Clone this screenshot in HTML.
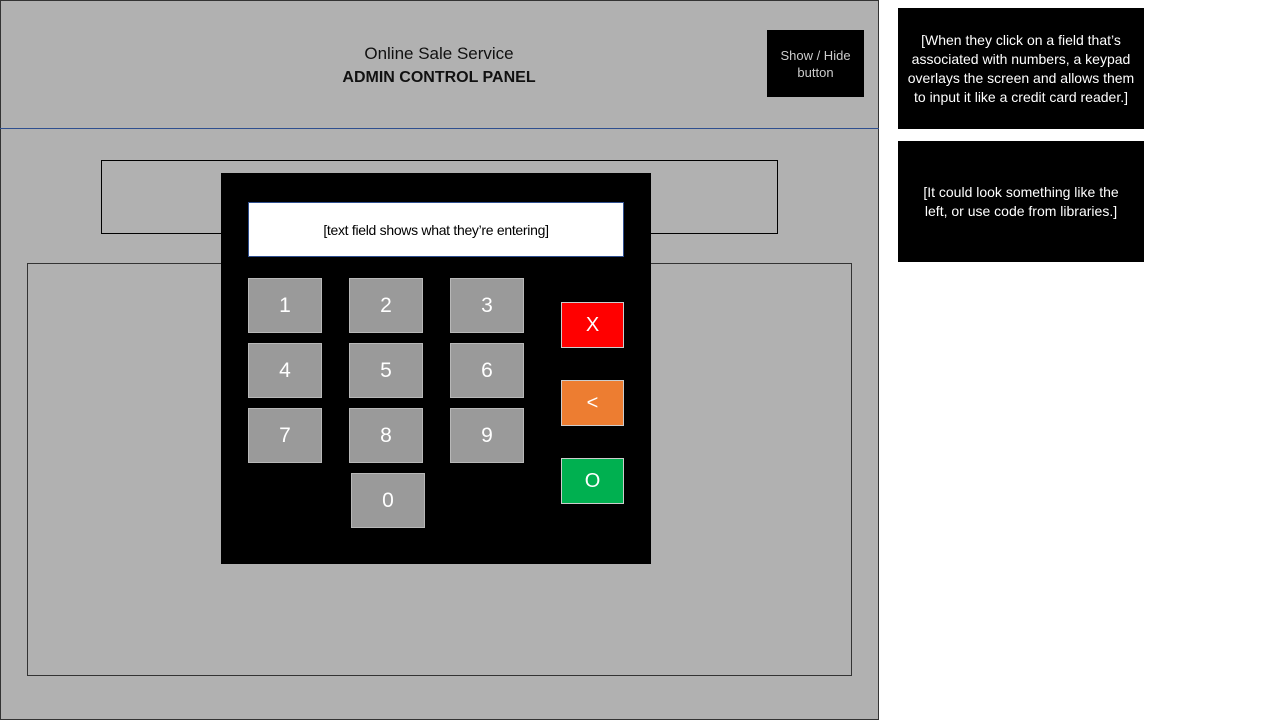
<!DOCTYPE html>
<html><head><style>
body{margin:0;width:1280px;height:720px;background:#fff;position:relative;overflow:hidden;font-family:"Liberation Sans",sans-serif}
.a{position:absolute;box-sizing:border-box}
.k{position:absolute;background:#9a9a9a;border:1px solid #b8b8b8;color:#fff;font-size:21px;display:flex;align-items:center;justify-content:center;width:74px;height:55px;box-sizing:border-box}
.b{position:absolute;color:#fff;font-size:20px;display:flex;align-items:center;justify-content:center;width:63px;height:46px;box-sizing:border-box;border:1px solid #ccc}
.n{background:#000;color:#fff;font-size:14px;text-align:center;display:flex;align-items:center;justify-content:center;line-height:19px}
</style></head><body>
<div class="a" style="left:0;top:0;width:879px;height:720px;background:#b1b1b1;border:1px solid #333"></div>
<div class="a" style="left:0;top:128px;width:879px;height:1px;background:#2f4f8f"></div>
<div class="a" style="left:0;top:42px;width:878px;text-align:center;font-size:17px;line-height:23px;color:#111">Online Sale Service<br><b style="font-size:16px">ADMIN CONTROL PANEL</b></div>
<div class="a n" style="left:767px;top:30px;width:97px;height:67px;color:#ccc;font-size:13px;line-height:17px">Show / Hide<br>button</div>
<div class="a" style="left:101px;top:160px;width:677px;height:74px;border:1px solid #000"></div>
<div class="a" style="left:27px;top:263px;width:825px;height:413px;border:1px solid #333"></div>
<div class="a" style="left:221px;top:173px;width:430px;height:391px;background:#000"></div>
<div class="a" style="left:248px;top:202px;width:376px;height:55px;background:#fff;border:1px solid #2f4f8f;font-size:14px;display:flex;align-items:center;justify-content:center;letter-spacing:-0.3px">[text field shows what they’re entering]</div>
<div class="k" style="left:248px;top:278px">1</div>
<div class="k" style="left:349px;top:278px">2</div>
<div class="k" style="left:450px;top:278px">3</div>
<div class="k" style="left:248px;top:343px">4</div>
<div class="k" style="left:349px;top:343px">5</div>
<div class="k" style="left:450px;top:343px">6</div>
<div class="k" style="left:248px;top:408px">7</div>
<div class="k" style="left:349px;top:408px">8</div>
<div class="k" style="left:450px;top:408px">9</div>
<div class="k" style="left:351px;top:473px">0</div>
<div class="b" style="left:561px;top:302px;background:#ff0000">X</div>
<div class="b" style="left:561px;top:380px;background:#ed7d31">&lt;</div>
<div class="b" style="left:561px;top:458px;background:#00b050">O</div>
<div class="a n" style="left:898px;top:8px;width:246px;height:121px;padding:0 9px">[When they click on a field that’s associated with numbers, a keypad overlays the screen and allows them to input it like a credit card reader.]</div>
<div class="a n" style="left:898px;top:141px;width:246px;height:121px;padding:0 16px">[It could look something like the left, or use code from libraries.]</div>
</body></html>
